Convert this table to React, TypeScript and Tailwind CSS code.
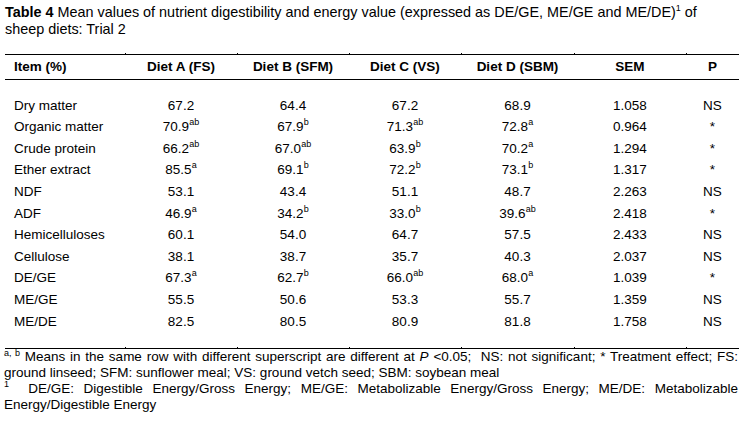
import React from "react";

type Cell = { v: string; s?: string };
type Row = { item: string; cells: Cell[]; sem: string; p: string };

const rows: Row[] = [
  { item: "Dry matter", cells: [{ v: "67.2" }, { v: "64.4" }, { v: "67.2" }, { v: "68.9" }], sem: "1.058", p: "NS" },
  { item: "Organic matter", cells: [{ v: "70.9", s: "ab" }, { v: "67.9", s: "b" }, { v: "71.3", s: "ab" }, { v: "72.8", s: "a" }], sem: "0.964", p: "*" },
  { item: "Crude protein", cells: [{ v: "66.2", s: "ab" }, { v: "67.0", s: "ab" }, { v: "63.9", s: "b" }, { v: "70.2", s: "a" }], sem: "1.294", p: "*" },
  { item: "Ether extract", cells: [{ v: "85.5", s: "a" }, { v: "69.1", s: "b" }, { v: "72.2", s: "b" }, { v: "73.1", s: "b" }], sem: "1.317", p: "*" },
  { item: "NDF", cells: [{ v: "53.1" }, { v: "43.4" }, { v: "51.1" }, { v: "48.7" }], sem: "2.263", p: "NS" },
  { item: "ADF", cells: [{ v: "46.9", s: "a" }, { v: "34.2", s: "b" }, { v: "33.0", s: "b" }, { v: "39.6", s: "ab" }], sem: "2.418", p: "*" },
  { item: "Hemicelluloses", cells: [{ v: "60.1" }, { v: "54.0" }, { v: "64.7" }, { v: "57.5" }], sem: "2.433", p: "NS" },
  { item: "Cellulose", cells: [{ v: "38.1" }, { v: "38.7" }, { v: "35.7" }, { v: "40.3" }], sem: "2.037", p: "NS" },
  { item: "DE/GE", cells: [{ v: "67.3", s: "a" }, { v: "62.7", s: "b" }, { v: "66.0", s: "ab" }, { v: "68.0", s: "a" }], sem: "1.039", p: "*" },
  { item: "ME/GE", cells: [{ v: "55.5" }, { v: "50.6" }, { v: "53.3" }, { v: "55.7" }], sem: "1.359", p: "NS" },
  { item: "ME/DE", cells: [{ v: "82.5" }, { v: "80.5" }, { v: "80.9" }, { v: "81.8" }], sem: "1.758", p: "NS" },
];

const headers = ["Item (%)", "Diet A (FS)", "Diet B (SFM)", "Diet C (VS)", "Diet D (SBM)", "SEM", "P"];
const grid = "grid grid-cols-[120px_112px_112px_112px_113px_112px_53px]";

function Tick() {
  return <span className="absolute left-0 top-[-2px] h-[2px] w-px bg-black" />;
}

export default function App() {
  return (
    <div className="min-h-screen bg-white text-black font-['Liberation_Sans',Arial,sans-serif] pl-[5px] pt-[4px]">
      <p className="w-[734px] text-[14.4px] leading-[17px]">
        <b>Table 4</b> Mean values of nutrient digestibility and energy value (expressed as DE/GE, ME/GE and ME/DE)
        <sup className="text-[9px] -top-[6px]">1</sup> of sheep diets: Trial 2
      </p>

      <div className="mt-[16px] w-[734px] text-[13.5px]">
        {/* header */}
        <div className={`${grid} h-[26px] items-center border-y border-black font-bold`}>
          {headers.map((h, i) => (
            <div key={h} className={`relative h-full flex items-center ${i === 0 ? "pl-[9px]" : "justify-center"}`}>
              {i > 0 && <Tick />}
              {h}
            </div>
          ))}
        </div>

        {/* body */}
        <div className="pt-[15px] pb-[15px]">
          {rows.map((r) => (
            <div key={r.item} className={`${grid} h-[21.6px] items-center`}>
              <div className="pl-[9px]">{r.item}</div>
              {r.cells.map((c, i) => (
                <div key={i} className="text-center">
                  {c.v}
                  {c.s && <sup className="text-[9px] -top-[6px]">{c.s}</sup>}
                </div>
              ))}
              <div className="text-center">{r.sem}</div>
              <div className="text-center">{r.p}</div>
            </div>
          ))}
        </div>

        {/* bottom rule */}
        <div className={`${grid} border-t border-black`}>
          {headers.map((h, i) => (
            <div key={h} className="relative h-0">
              {i > 0 && <Tick />}
            </div>
          ))}
        </div>
      </div>

      <div className="-ml-px w-[734px] text-[13.5px] leading-[16px] text-justify">
        <p>
          <sup className="text-[9px] -top-[5px]">a, b</sup> Means in the same row with different superscript are different at{" "}
          <i>P</i> &lt;0.05;&nbsp; NS: not significant; * Treatment effect; FS: ground linseed; SFM: sunflower meal; VS:
          ground vetch seed; SBM: soybean meal
        </p>
        <p>
          <sup className="text-[9px] -top-[6px]">1</sup>&nbsp; DE/GE: Digestible Energy/Gross Energy; ME/GE: Metabolizable
          Energy/Gross Energy; ME/DE: Metabolizable Energy/Digestible Energy
        </p>
      </div>
    </div>
  );
}
